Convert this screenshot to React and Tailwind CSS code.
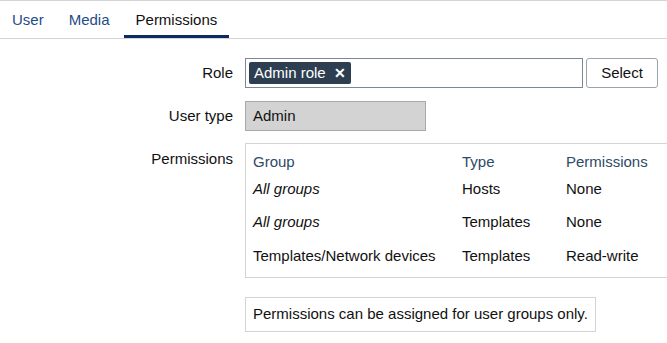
import React from "react";

const rows = [
  { group: "All groups", italic: true, type: "Hosts", perm: "None" },
  { group: "All groups", italic: true, type: "Templates", perm: "None" },
  { group: "Templates/Network devices", italic: false, type: "Templates", perm: "Read-write" },
];

export default function App() {
  return (
    <div className="w-[667px] h-[343px] overflow-hidden bg-white text-[15px] text-[#111] font-['Liberation_Sans',Arial,sans-serif]">
      {/* tabs */}
      <div className="flex h-[39px] border-t border-b border-[#d4d4d4]">
        <div className="px-3 pt-[8px] text-[#1f4b86]">User</div>
        <div className="px-3 pt-[8px] ml-[1px] text-[#1f4b86]">Media</div>
        <div className="px-3 pt-[8px] ml-[2px] border-b-[3px] border-[#0e2a5e]">Permissions</div>
      </div>

      <div className="flex flex-col pt-[19px]">
        {/* role */}
        <div className="flex items-center">
          <div className="w-[233px] shrink-0 text-right">Role</div>
          <div className="ml-[12px] shrink-0 flex items-center w-[338px] h-[30px] border border-[#7b8896] px-[3px]">
            <span className="flex items-center h-[22px] px-[5px] bg-[#2c3e50] text-white rounded-[2px]">
              Admin role
              <span className="ml-[8px] text-[14px] font-bold">✕</span>
            </span>
          </div>
          <button className="ml-[3px] shrink-0 w-[72px] h-[30px] border border-[#9aa3ab] rounded-[3px] bg-white">
            Select
          </button>
        </div>

        {/* user type */}
        <div className="flex items-center mt-[13px]">
          <div className="w-[233px] shrink-0 text-right">User type</div>
          <div className="ml-[12px] shrink-0 w-[181px] h-[30px] border border-[#a9a9a9] bg-[#d3d3d3] flex items-center px-[7px]">
            Admin
          </div>
        </div>

        {/* permissions */}
        <div className="flex items-start mt-[12px]">
          <div className="w-[233px] shrink-0 text-right pt-[5px]">Permissions</div>
          <div className="ml-[12px] shrink-0 flex flex-col items-start">
            <div className="w-[440px] border border-[#d4d4d4] px-[7px] pt-[7px] pb-[5px]">
              <div className="grid grid-cols-[209px_104px_1fr] h-[20px] text-[#2e4a66]">
                <div>Group</div>
                <div>Type</div>
                <div>Permissions</div>
              </div>
              {rows.map((r, i) => (
                <div key={i} className="grid grid-cols-[209px_104px_1fr] h-[33.5px] items-center pt-[2px]">
                  <div className={r.italic ? "italic" : ""}>{r.group}</div>
                  <div>{r.type}</div>
                  <div>{r.perm}</div>
                </div>
              ))}
            </div>
            <div className="mt-[19px] h-[35px] border border-[#d4d4d4] flex items-center px-[7px] whitespace-nowrap">
              Permissions can be assigned for user groups only.
            </div>
          </div>
        </div>
      </div>
    </div>
  );
}
